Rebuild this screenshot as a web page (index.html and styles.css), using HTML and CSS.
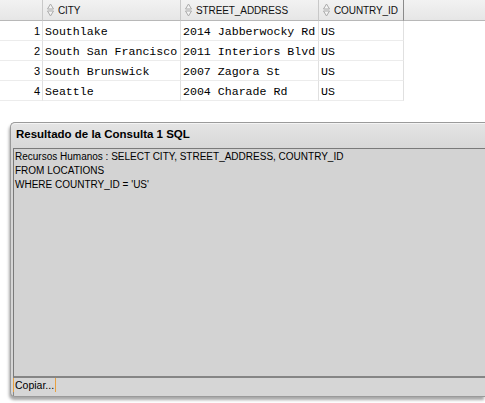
FILE: index.html
```html
<!DOCTYPE html>
<html>
<head>
<meta charset="utf-8">
<link rel="stylesheet" href="styles.css">
</head>
<body>
<div class="grid">
  <div class="hcell rn"></div>
  <div class="hcell"><svg class="sort" width="7" height="14" viewBox="0 0 7 14"><path d="M0.5 6 L3.5 1 L6.5 6 Z M0.5 8 L3.5 13 L6.5 8 Z" fill="#f4f4f4" stroke="#aaaaaa" stroke-width="1"/></svg>CITY</div>
  <div class="hcell"><svg class="sort" width="7" height="14" viewBox="0 0 7 14"><path d="M0.5 6 L3.5 1 L6.5 6 Z M0.5 8 L3.5 13 L6.5 8 Z" fill="#f4f4f4" stroke="#aaaaaa" stroke-width="1"/></svg>STREET_ADDRESS</div>
  <div class="hcell last"><svg class="sort" width="7" height="14" viewBox="0 0 7 14"><path d="M0.5 6 L3.5 1 L6.5 6 Z M0.5 8 L3.5 13 L6.5 8 Z" fill="#f4f4f4" stroke="#aaaaaa" stroke-width="1"/></svg>COUNTRY_ID</div>
  <div class="hcell fill"></div>

  <div class="cell rn">1</div><div class="cell">Southlake</div><div class="cell">2014 Jabberwocky Rd</div><div class="cell">US</div><div class="blank"></div>
  <div class="cell rn">2</div><div class="cell">South San Francisco</div><div class="cell">2011 Interiors Blvd</div><div class="cell">US</div><div class="blank"></div>
  <div class="cell rn">3</div><div class="cell">South Brunswick</div><div class="cell">2007 Zagora St</div><div class="cell">US</div><div class="blank"></div>
  <div class="cell rn">4</div><div class="cell">Seattle</div><div class="cell">2004 Charade Rd</div><div class="cell">US</div><div class="blank"></div>
</div>

<div class="dialog">
  <div class="title">Resultado de la Consulta 1 SQL</div>
  <div class="body">
    <div class="text">Recursos Humanos : SELECT CITY, STREET_ADDRESS, COUNTRY_ID<br>FROM LOCATIONS<br>WHERE COUNTRY_ID = 'US'</div>
    <div class="buttons"><span class="copy">Copiar...</span></div>
  </div>
</div>
</body>
</html>
```

FILE: styles.css
```css
html, body {
  margin: 0;
  padding: 0;
  background: #ffffff;
  overflow: hidden;
  width: 485px;
  height: 403px;
}
body {
  font-family: "Liberation Sans", Arial, sans-serif;
  color: #000;
}
.grid {
  display: grid;
  grid-template-columns: 43px 138px 138px 85px 1fr;
  grid-template-rows: 21px repeat(4, 20px);
}
.hcell {
  background: linear-gradient(#f2f2f2, #e6e6e6);
  border-bottom: 1px solid #b8b8b8;
  border-right: 1px solid #c8c8c8;
  font-size: 10px;
  letter-spacing: -0.1px;
  display: flex;
  align-items: center;
  padding-left: 4px;
  box-sizing: border-box;
  color: #111;
  white-space: nowrap;
}
.hcell.rn { padding: 0; }
.hcell.last { border-right: 1px solid #8a8a8a; }
.hcell.fill { border-right: none; }
.sort { margin-right: 4px; flex: none; }
.cell {
  font-family: "Liberation Mono", "Courier New", monospace;
  font-size: 11.6px;
  border-bottom: 1px solid #ececec;
  border-right: 1px solid #e0e0e0;
  display: flex;
  align-items: center;
  padding: 2px 0 0 2px;
  box-sizing: border-box;
  white-space: nowrap;
  overflow: hidden;
}
.cell.rn {
  font-family: "Liberation Sans", Arial, sans-serif;
  font-size: 11px;
  justify-content: flex-end;
  padding: 1px 2px 0 0;
}
.dialog {
  margin: 21px 0 0 10px;
  width: 475px;
  height: 275px;
  box-sizing: border-box;
  border: 1px solid #9a9a9a;
  border-right: none;
  border-radius: 5px 0 0 5px;
  background: #d6d6d6;
  box-shadow: -1px 3px 3px rgba(0,0,0,0.35);
  display: flex;
  flex-direction: column;
}
.title {
  height: 25px;
  flex: none;
  box-sizing: border-box;
  padding: 4px 0 0 5px;
  font-weight: bold;
  font-size: 11.5px;
  background: linear-gradient(#e4e4e4, #d8d8d8);
  border-top: 1px solid #f4f4f4;
  border-radius: 5px 0 0 0;
}
.body {
  flex: 1;
  display: flex;
  flex-direction: column;
  padding-left: 2px;
}
.text {
  flex: 1;
  border-top: 1px solid #7a7a7a;
  border-left: 1px solid #7a7a7a;
  border-bottom: 2px solid #858585;
  background: #d3d3d3;
  font-size: 10px;
  line-height: 14px;
  padding: 1px 0 0 1px;
  white-space: nowrap;
}
.buttons {
  height: 18px;
  flex: none;
  border-left: 1px solid #8a8a8a;
  display: flex;
  align-items: flex-start;
}
.copy {
  font-size: 10.5px;
  height: 14px;
  line-height: 15px;
  padding: 0 1px;
  border-left: 1px solid #e8a040;
  border-right: 1px solid #e8a040;
  margin-left: -1px;
}
```
